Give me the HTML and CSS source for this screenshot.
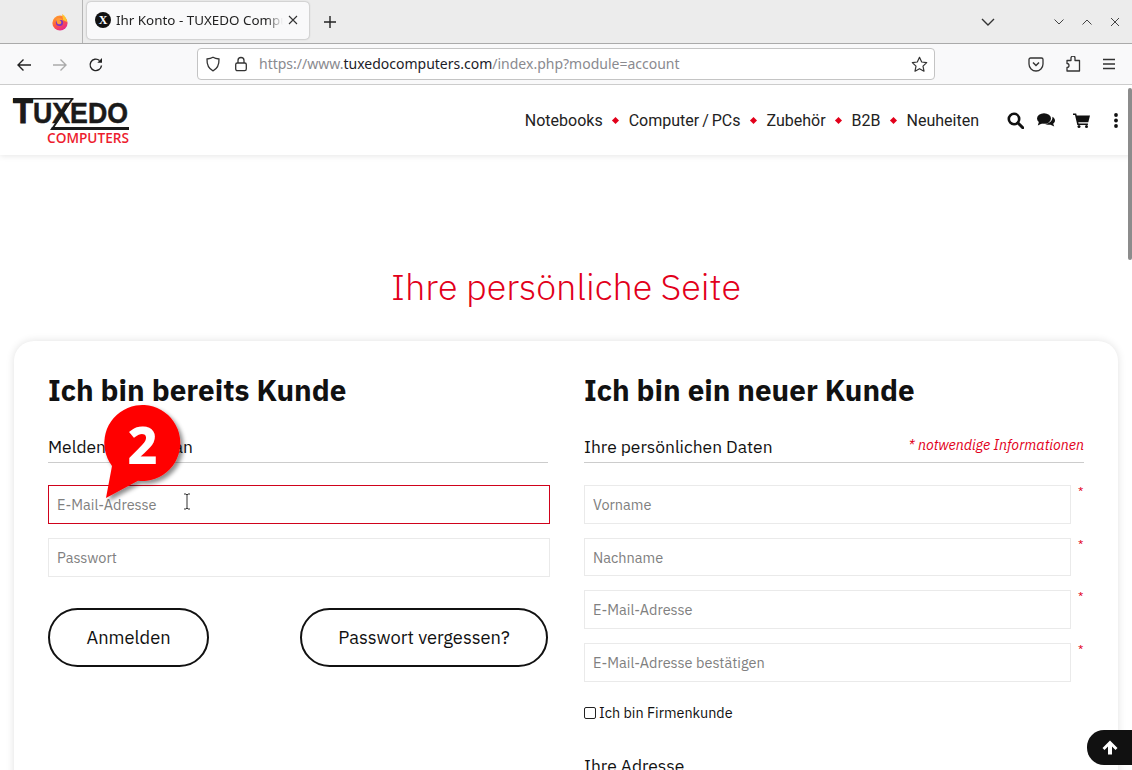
FILE: index.html
```html
<!DOCTYPE html>
<html lang="de">
<head>
  <meta charset="UTF-8">
  <title>Ihr Konto - TUXEDO Computers</title>
  <link rel="stylesheet" href="styles.css">
</head>
<body>
  <!-- browser chrome -->
  <div class="tabbar">
    <div class="tabbar-start">
      <svg class="ff-logo" width="18" height="18" viewBox="0 0 18 18">
        <defs><linearGradient id="ffg" x1="0" y1="0" x2="0.6" y2="1"><stop offset="0" stop-color="#ffb52b"/><stop offset="0.55" stop-color="#ff5a3c"/><stop offset="1" stop-color="#e5288f"/></linearGradient></defs>
        <circle cx="9" cy="10" r="7.6" fill="url(#ffg)"/>
        <path d="M11 1c3 2 5 4.500 5 8l-4-2z" fill="#ffc22e"/>
        <circle cx="8.500" cy="9.500" r="3.600" fill="#7a30c8"/>
        <path d="M5 6.500c2-2 6-2 7 1-1.500-1-3-.6-3.500 0 2 .2 2.500 2.500 1 3.500-1.500.8-3 0-3.500-1z" fill="#ff9a36"/>
      </svg>
    </div>
    <div class="tab">
      <span class="tab-icon">X</span>
      <span class="tab-title">Ihr Konto - TUXEDO Compu</span>
      <svg class="tab-close" width="10" height="10" viewBox="0 0 10 10"><path d="M1 1l8 8M9 1l-8 8" stroke="#333" stroke-width="1.100"/></svg>
    </div>
    <svg class="new-tab" width="14" height="14" viewBox="0 0 14 14"><path d="M7 1v12M1 7h12" stroke="#222" stroke-width="1.400"/></svg>
    <div class="spacer"></div>
    <svg class="list-tabs" width="14" height="8" viewBox="0 0 14 8"><path d="M1 1l6 6 6-6" fill="none" stroke="#333" stroke-width="1.400"/></svg>
    <div class="win-buttons">
      <svg width="10" height="6" viewBox="0 0 10 6"><path d="M.5.5L5 5 9.500.5" fill="none" stroke="#444" stroke-width="1"/></svg>
      <svg width="10" height="6" viewBox="0 0 10 6"><path d="M.5 5.500L5 1l4.500 4.500" fill="none" stroke="#444" stroke-width="1"/></svg>
      <svg width="10" height="10" viewBox="0 0 10 10"><path d="M1 1l8 8M9 1l-8 8" stroke="#444" stroke-width="1"/></svg>
    </div>
  </div>

  <div class="toolbar">
    <div class="nav-buttons">
      <svg width="16" height="14" viewBox="0 0 16 14"><path d="M15 7H2M7.500 1.500L2 7l5.500 5.500" fill="none" stroke="#222" stroke-width="1.400"/></svg>
      <svg width="16" height="14" viewBox="0 0 16 14"><path d="M1 7h13M8.500 1.500L14 7l-5.500 5.500" fill="none" stroke="#aaa" stroke-width="1.400"/></svg>
      <svg width="16" height="16" viewBox="0 0 16 16"><path d="M13.500 8.500A5.700 5.700 0 1 1 11.500 3.500" fill="none" stroke="#222" stroke-width="1.400"/><path d="M14 1v4.800H9.300z" fill="#222"/></svg>
    </div>
    <div class="urlbar">
      <svg class="shield" width="16" height="16" viewBox="0 0 16 16"><path d="M8 1.200c2 1.200 4 1.600 6 1.800.2 5.500-1.800 9.800-6 11.800C3.800 12.800 1.800 8.500 2 3c2-.2 4-.6 6-1.800z" fill="none" stroke="#333" stroke-width="1.300"/></svg>
      <svg class="lock" width="14" height="16" viewBox="0 0 14 16"><rect x="1.700" y="7" width="10.600" height="7.700" rx="1.600" fill="none" stroke="#333" stroke-width="1.300"/><path d="M4 7V4.500a3 3 0 0 1 6 0V7" fill="none" stroke="#333" stroke-width="1.300"/></svg>
      <span class="url">https://www.<b>tuxedocomputers.com</b>/index.php?module=account</span>
      <svg class="star" width="17" height="17" viewBox="0 0 17 17"><path d="M8.500 1.300l2.200 4.700 5 .6-3.700 3.500 1 5.100-4.500-2.500-4.500 2.500 1-5.100L1.300 6.600l5-.6z" fill="none" stroke="#333" stroke-width="1.200" stroke-linejoin="round"/></svg>
    </div>
    <div class="tool-icons">
      <svg width="16" height="15" viewBox="0 0 16 15"><path d="M2.500 1h11A1.500 1.500 0 0 1 15 2.500V7a7 7 0 0 1-14 0V2.500A1.500 1.500 0 0 1 2.500 1z" fill="none" stroke="#333" stroke-width="1.300"/><path d="M5 5.500l3 3 3-3" fill="none" stroke="#333" stroke-width="1.500"/></svg>
      <svg width="16" height="16" viewBox="0 0 16 16"><path d="M6 1.500a2 2 0 0 1 4 0V4h4.500v10.500H2V11a2 2 0 1 0 0-4V4h4z" transform="translate(0 .5)" fill="none" stroke="#333" stroke-width="1.300" stroke-linejoin="round"/></svg>
      <svg width="14" height="12" viewBox="0 0 14 12"><path d="M1 1.500h12M1 6h12M1 10.500h12" stroke="#333" stroke-width="1.300"/></svg>
    </div>
  </div>

  <!-- page -->
  <div class="viewport">
    <header class="site-header">
      <svg class="logo" width="120" height="56" viewBox="0 0 120 56">
        <path d="M1 6h20v4.500H1zM20 6h41.500v1.500H20z" fill="#1a1a1a"/>
        <path d="M60.500 6.500L40.500 36.500" stroke="#1a1a1a" stroke-width="2"/>
        <path d="M40 35h77v3H38z" fill="#1a1a1a"/>
        <text x="1" y="31" class="logo-t" textLength="20" lengthAdjust="spacingAndGlyphs">T</text>
        <text x="21" y="31" class="logo-main" textLength="95" lengthAdjust="spacingAndGlyphs">UXEDO</text>
        <text x="35" y="51" class="logo-sub" textLength="82" lengthAdjust="spacingAndGlyphs">COMPUTERS</text>
      </svg>
      <nav class="main-nav">
        <a>Notebooks</a><i class="dot"></i>
        <a>Computer / PCs</a><i class="dot"></i>
        <a>Zubehör</a><i class="dot"></i>
        <a>B2B</a><i class="dot"></i>
        <a>Neuheiten</a>
      </nav>
      <div class="header-icons">
        <svg width="17" height="17" viewBox="0 0 17 17"><circle cx="7" cy="7" r="5.200" fill="none" stroke="#111" stroke-width="2.600"/><path d="M10.800 10.800l5 5" stroke="#111" stroke-width="3" stroke-linecap="round"/></svg>
        <svg class="icon-chat" width="18" height="15" viewBox="0 0 18 15"><ellipse cx="7" cy="5.500" rx="7" ry="5.200" fill="#111"/><path d="M2 8.500L.8 12.500l5-2.500z" fill="#111"/><path d="M15.400 3.800c1.700 1 2.600 2.400 2.600 3.800 0 1.300-.7 2.400-1.800 3.200l1 2.700-3.700-1.800c-2 .4-4.200 0-5.600-1 4 .2 8-2.500 7.500-6.900z" fill="#111"/></svg>
        <svg class="icon-cart" width="17" height="15" viewBox="0 0 17 15"><path d="M0 .5h3.200l.5 2H17l-1.700 6.700H5.300l.3 1.400h9.300v1.500H4.300L2 2H0z" fill="#111"/><circle cx="6" cy="13.500" r="1.500" fill="#111"/><circle cx="13.500" cy="13.500" r="1.500" fill="#111"/></svg>
        <svg class="icon-more" width="4" height="15" viewBox="0 0 4 15"><circle cx="2" cy="2" r="1.900" fill="#111"/><circle cx="2" cy="7.500" r="1.900" fill="#111"/><circle cx="2" cy="13" r="1.900" fill="#111"/></svg>
      </div>
    </header>

    <main class="content">
      <h1 class="page-title">Ihre persönliche Seite</h1>
      <section class="card">
        <div class="col">
          <h2>Ich bin bereits Kunde</h2>
          <div class="section-head"><span>Melden Sie sich an</span></div>
          <div class="fields">
            <input class="field field-active" placeholder="E-Mail-Adresse">
            <input class="field" placeholder="Passwort">
          </div>
          <div class="actions">
            <button class="pill pill-login">Anmelden</button>
            <button class="pill pill-forgot">Passwort vergessen?</button>
          </div>
        </div>
        <div class="col">
          <h2>Ich bin ein neuer Kunde</h2>
          <div class="section-head"><span>Ihre persönlichen Daten</span><em>* notwendige Informationen</em></div>
          <div class="fields">
            <div class="req-row"><input class="field" placeholder="Vorname"><span class="req">*</span></div>
            <div class="req-row"><input class="field" placeholder="Nachname"><span class="req">*</span></div>
            <div class="req-row"><input class="field" placeholder="E-Mail-Adresse"><span class="req">*</span></div>
            <div class="req-row"><input class="field" placeholder="E-Mail-Adresse bestätigen"><span class="req">*</span></div>
          </div>
          <label class="check"><span class="box"></span>Ich bin Firmenkunde</label>
          <div class="address-head">Ihre Adresse</div>
        </div>
      </section>
    </main>

    <div class="scrollbar"></div>
    <div class="to-top">
      <svg width="16" height="15" viewBox="0 0 16 15"><path d="M8 .5L15.500 8l-2 2L10 6.500V14.500H6V6.500L2.500 10l-2-2z" fill="#fff"/></svg>
    </div>

    <!-- annotation over the page -->
    <svg class="badge" width="96" height="106" viewBox="0 0 96 106">
      <defs><filter id="bs" x="-20%" y="-20%" width="150%" height="150%"><feDropShadow dx="3" dy="3" stdDeviation="2" flood-color="#000" flood-opacity="0.45"/></filter></defs>
      <path d="M18 63L12 95l32-17.200A38 38 0 1 0 18 63z" fill="#f00" filter="url(#bs)"/>
      <text x="48.500" y="61" class="badge-num">2</text>
    </svg>
    <svg class="ibeam" width="8" height="17" viewBox="0 0 8 17"><path d="M1 1h2l1 1 1-1h2M4 2v13M1 16h2l1-1 1 1h2" fill="none" stroke="#333" stroke-width="1"/></svg>
  </div>
</body>
</html>
```
FILE: styles.css
```css
* {
  box-sizing: border-box;
}
html, body {
  height: 100%;
}
body {
  margin: 0;
  overflow: hidden;
  display: flex;
  flex-direction: column;
  font-family: "IBM Plex Sans", "Noto Sans", Roboto, sans-serif;
  color: #111;
  background: #fff;
}

/* browser chrome */
.tabbar {
  height: 44px;
  flex: none;
  display: flex;
  align-items: center;
  background: #ececec;
  border-bottom: 1px solid #aaa;
  font-family: "Noto Sans", sans-serif;
}
.tabbar-start {
  width: 83px;
  height: 43px;
  flex: none;
  padding: 13px 0 0 51px;
  border-right: 1px solid #b5b5b5;
}
.ff-logo {
  display: block;
}
.tab {
  width: 222px;
  height: 37px;
  margin: 0 0 3px 4px;
  flex: none;
  display: flex;
  align-items: center;
  padding: 0 8px;
  background: #f9f9fa;
  border-radius: 4px;
  box-shadow: 0 0 2px rgba(0, 0, 0, 0.4);
}
.tab-icon {
  width: 16px;
  height: 16px;
  flex: none;
  border-radius: 50%;
  background: #111;
  color: #fff;
  font: bold 12px/16px "Liberation Serif", serif;
  text-align: center;
}
.tab-title {
  margin-left: 5px;
  width: 167px;
  font-size: 13.400px;
  color: #222;
  white-space: nowrap;
  -webkit-mask-image: linear-gradient(to right, #000 150px, transparent 167px);
  mask-image: linear-gradient(to right, #000 150px, transparent 167px);
}
.tab-close {
  margin-left: 5px;
  margin-top: -1px;
  flex: none;
}
.new-tab {
  margin-left: 13.500px;
  flex: none;
}
.spacer {
  flex: 1;
}
.list-tabs {
  flex: none;
  margin-right: 59px;
}
.win-buttons {
  display: flex;
  align-items: center;
  gap: 18px;
  margin-right: 12px;
}

.toolbar {
  height: 41px;
  flex: none;
  display: flex;
  align-items: center;
  background: #f9f9fa;
  border-bottom: 1px solid #ccc;
}
.nav-buttons {
  display: flex;
  align-items: center;
  gap: 20px;
  padding-left: 16px;
  padding-top: 1px;
  width: 197px;
  flex: none;
}
.urlbar {
  width: 738px;
  height: 32px;
  flex: none;
  display: flex;
  align-items: center;
  padding: 0 6px 0 7px;
  background: #fff;
  border: 1px solid #c4c4c4;
  border-radius: 4px;
}
.lock {
  margin-left: 13px;
}
.url {
  margin-left: 11px;
  margin-top: -2px;
  flex: 1;
  font: 14px "Noto Sans", sans-serif;
  color: #8a8a8f;
  white-space: nowrap;
}
.url b {
  font-weight: 400;
  color: #1c1c28;
}
.tool-icons {
  display: flex;
  align-items: center;
  gap: 21px;
  margin-left: 93px;
}

/* page */
.viewport {
  position: relative;
  flex: 1;
  overflow: hidden;
  min-height: 0;
}
.site-header {
  height: 70px;
  display: flex;
  align-items: center;
  padding: 0 14px 0 12px;
  background: #fff;
  box-shadow: 0 1px 6px rgba(0, 0, 0, 0.1);
}
.logo {
  display: block;
  flex: none;
  overflow: visible;
}
.logo-t {
  font: bold 35px "Liberation Sans", sans-serif;
  fill: #1a1a1a;
  stroke: #1a1a1a;
  stroke-width: 0.8px;
}
.logo-main {
  font: bold 29px "Liberation Sans Narrow", "Liberation Sans", sans-serif;
  fill: #1a1a1a;
  stroke: #1a1a1a;
  stroke-width: 0.5px;
}
.logo-sub {
  font: 600 13.500px "Open Sans", sans-serif;
  fill: #ed1c2e;
}
.main-nav {
  margin-left: auto;
  display: flex;
  align-items: center;
  font: 16px Roboto, sans-serif;
  word-spacing: -1px;
  color: #222;
}
.dot {
  width: 5px;
  height: 5px;
  margin: 0 10.500px;
  background: #e2001a;
  transform: rotate(45deg);
}
.header-icons {
  display: flex;
  align-items: center;
  margin-left: 28px;
}
.icon-chat {
  margin-left: 13px;
}
.icon-cart {
  margin-left: 18px;
}
.icon-more {
  margin-left: 24px;
}

.content {
  padding: 0 14px;
}
.page-title {
  margin: 112px 0 34px;
  text-align: center;
  font-size: 36px;
  line-height: 40px;
  font-weight: 300;
  color: #e2001a;
}
.card {
  display: grid;
  grid-template-columns: 502px 500px;
  column-gap: 34px;
  padding: 30px 34px;
  height: 600px;
  border-radius: 20px;
  background: #fff;
  box-shadow: 0 0 8px rgba(0, 0, 0, 0.12);
}
h2 {
  margin: 0;
  font-size: 29.600px;
  line-height: 38px;
  padding-bottom: 2px;
  font-weight: 700;
}
.section-head {
  height: 40px;
  margin-top: 12px;
  width: 500px;
  display: flex;
  justify-content: space-between;
  align-items: center;
  border-bottom: 1px solid #ccc;
  font-size: 17.400px;
  padding-top: 8px;
}
.section-head em {
  color: #e2001a;
  font-size: 14.200px;
  margin-top: -4px;
}
.fields {
  display: flex;
  flex-direction: column;
  gap: 14px;
  margin-top: 22.300px;
}
.field {
  width: 100%;
  height: 38.600px;
  padding: 0 8px;
  border: 1px solid #eaeaea;
  font: 14.500px "IBM Plex Sans", "Noto Sans", Roboto, sans-serif;
  background: #fff;
  outline: none;
}
.field::placeholder {
  color: #808080;
}
.field-active {
  height: 39px;
  border-color: #d0021b;
}
.req-row {
  display: flex;
  width: 500px;
  gap: 7px;
}
.req-row .field {
  width: 487px;
  flex: none;
}
.req {
  color: #e2001a;
  font-size: 12px;
  line-height: 12px;
}
.actions {
  display: flex;
  justify-content: space-between;
  width: 500px;
  margin-top: 31px;
}
.pill {
  height: 59px;
  border: 2px solid #111;
  border-radius: 30px;
  background: #fff;
  color: #111;
  font: 18.300px "IBM Plex Sans", "Noto Sans", Roboto, sans-serif;
}
.pill-login {
  width: 161px;
}
.pill-forgot {
  width: 248px;
}
.check {
  display: flex;
  align-items: center;
  gap: 3px;
  margin-top: 21px;
  font-size: 14.400px;
  line-height: 20px;
}
.box {
  width: 12px;
  height: 12px;
  border: 1.500px solid #222;
  border-radius: 2px;
}
.address-head {
  margin-top: 31px;
  font-size: 17.400px;
  line-height: 24px;
}

.scrollbar {
  position: absolute;
  top: 3px;
  right: 0;
  width: 4px;
  height: 172px;
  background: #8c8c8c;
  border-radius: 2px;
}
.to-top {
  position: absolute;
  right: 0;
  bottom: 5px;
  width: 45px;
  height: 35px;
  display: flex;
  align-items: center;
  justify-content: center;
  background: #111;
  border-radius: 17px 0 0 17px;
}
.badge {
  position: absolute;
  left: 94px;
  top: 318px;
}
.badge-num {
  font: 800 52px "Noto Sans", sans-serif;
  fill: #fff;
  text-anchor: middle;
}
.ibeam {
  position: absolute;
  left: 183px;
  top: 408px;
}
```
